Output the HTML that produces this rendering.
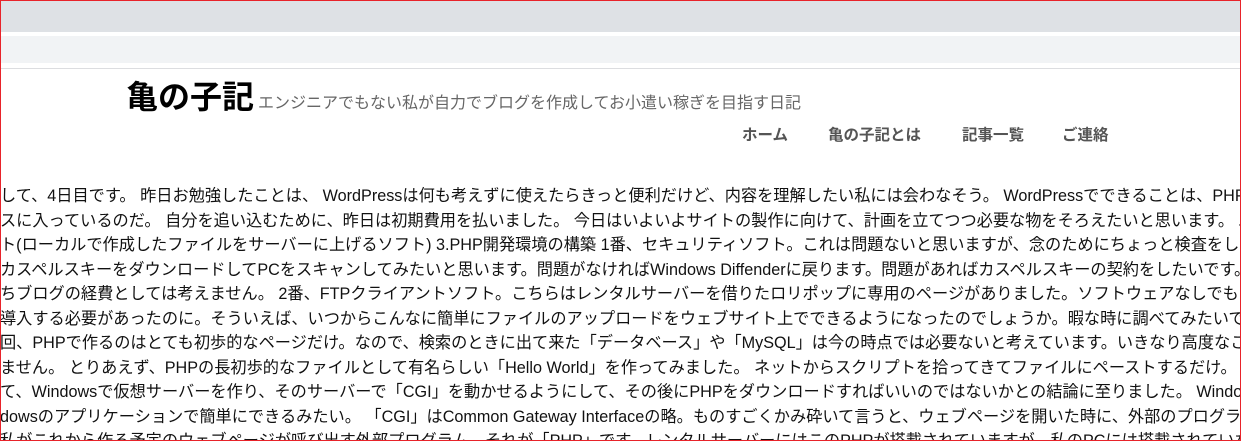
<!DOCTYPE html>
<html><head><meta charset="utf-8">
<style>
html,body{margin:0;padding:0;width:1241px;height:441px;overflow:hidden;}
body{position:relative;background:#fff;font-family:"Liberation Sans","Noto Sans CJK JP",sans-serif;}
.wrap{position:absolute;left:0;top:0;width:1241px;height:441px;overflow:hidden;}
.frame{position:absolute;left:0;top:0;width:1239px;height:439px;border:1px solid #e8232a;z-index:10;pointer-events:none;}
.bar1{position:absolute;left:0;top:0;width:1241px;height:32px;background:#dee1e5;}
.bar2{position:absolute;left:0;top:36px;width:1241px;height:27px;background:#f1f3f5;}
.line{position:absolute;left:0;top:68px;width:1241px;height:1px;background:#dcdde0;}
.title{position:absolute;left:126px;top:77px;font-size:32px;font-weight:bold;color:#000;line-height:40px;}
.tag{position:absolute;left:258px;top:94px;font-size:16px;color:#666;line-height:20px;}
.nav{position:absolute;top:126px;font-size:15.5px;font-weight:bold;color:#555;line-height:20px;}
.txt{position:absolute;left:0;top:184px;width:1241px;height:257px;overflow:hidden;}
.t{white-space:nowrap;font-size:16.2px;color:#111;line-height:24.5px;height:24.5px;}
</style></head><body><div class="wrap">
<div class="bar1"></div><div class="bar2"></div><div class="line"></div>
<div class="title">亀の子記</div>
<div class="tag">エンジニアでもない私が自力でブログを作成してお小遣い稼ぎを目指す日記</div>
<div class="nav" style="left:742px">ホーム</div>
<div class="nav" style="left:828px">亀の子記とは</div>
<div class="nav" style="left:962px">記事一覧</div>
<div class="nav" style="left:1062px">ご連絡</div>
<div class="txt">
<div class="t">して、4日目です。 昨日お勉強したことは、 WordPressは何も考えずに使えたらきっと便利だけど、内容を理解したい私には会わなそう。 WordPressでできることは、PHP</div>
<div class="t">スに入っているのだ。 自分を追い込むために、昨日は初期費用を払いました。 今日はいよいよサイトの製作に向けて、計画を立てつつ必要な物をそろえたいと思います。 既</div>
<div class="t">ト(ローカルで作成したファイルをサーバーに上げるソフト) 3.PHP開発環境の構築 1番、セキュリティソフト。これは問題ないと思いますが、念のためにちょっと検査をして</div>
<div class="t">カスペルスキーをダウンロードしてPCをスキャンしてみたいと思います。問題がなければWindows Diffenderに戻ります。問題があればカスペルスキーの契約をしたいです。</div>
<div class="t">ちブログの経費としては考えません。 2番、FTPクライアントソフト。こちらはレンタルサーバーを借りたロリポップに専用のページがありました。ソフトウェアなしでも当</div>
<div class="t">導入する必要があったのに。そういえば、いつからこんなに簡単にファイルのアップロードをウェブサイト上でできるようになったのでしょうか。暇な時に調べてみたいです</div>
<div class="t">回、PHPで作るのはとても初歩的なページだけ。なので、検索のときに出て来た「データベース」や「MySQL」は今の時点では必要ないと考えています。いきなり高度なこと</div>
<div class="t">ません。 とりあえず、PHPの長初歩的なファイルとして有名らしい「Hello World」を作ってみました。 ネットからスクリプトを拾ってきてファイルにペーストするだけ。 現</div>
<div class="t">て、Windowsで仮想サーバーを作り、そのサーバーで「CGI」を動かせるようにして、その後にPHPをダウンロードすればいいのではないかとの結論に至りました。 Windows</div>
<div class="t">dowsのアプリケーションで簡単にできるみたい。 「CGI」はCommon Gateway Interfaceの略。ものすごくかみ砕いて言うと、ウェブページを開いた時に、外部のプログラ</div>
<div class="t">私がこれから作る予定のウェブページが呼び出す外部プログラム。それが「PHP」です。レンタルサーバーにはこのPHPが搭載されていますが、私のPCには搭載されていない</div>
</div>
<div class="frame"></div>
</div></body></html>
